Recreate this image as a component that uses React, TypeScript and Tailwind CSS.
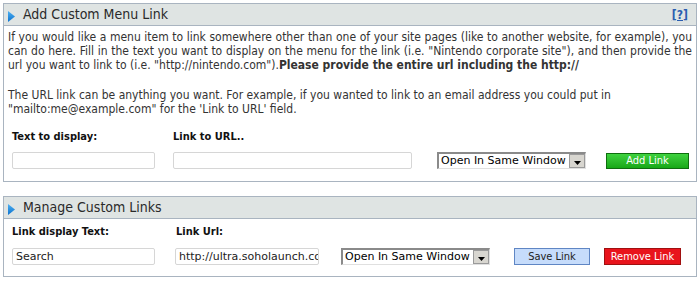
import React from "react";

const BODY = { fontFamily: '"DejaVu Sans Condensed", "Liberation Sans", sans-serif' };
const WIDE = { fontFamily: '"DejaVu Sans", Verdana, sans-serif' };

function Header({ title, help }: { title: string; help?: boolean }) {
  return (
    <div className="flex items-center h-[22px] bg-[#dfe4e3] border-b border-[#a9b4c0] pl-[4px] pr-[8px]">
      <svg width="8" height="11" viewBox="0 0 8 11" className="mt-[3px] mr-[7px]">
        <defs>
          <linearGradient id="tri" x1="0" y1="0" x2="0" y2="1">
            <stop offset="0" stopColor="#4fb0f0" />
            <stop offset="1" stopColor="#0a72d0" />
          </linearGradient>
        </defs>
        <polygon points="0,0 7,5.5 0,11" fill="url(#tri)" />
      </svg>
      <span className="text-[14px] text-[#2a2a2a] flex-1" style={BODY}>
        {title}
      </span>
      {help && (
        <a className="text-[12px] font-bold text-[#2a5db0] underline" style={BODY}>
          [?]
        </a>
      )}
    </div>
  );
}

function Input({ w, value }: { w: string; value?: string }) {
  return (
    <div
      className={`${w} h-[17px] border border-[#d6d6d6] rounded-[2px] bg-white overflow-hidden whitespace-nowrap text-[11px] leading-[15px] px-[3px] text-[#222]`}
      style={WIDE}
    >
      {value}
    </div>
  );
}

function Select() {
  return (
    <div className="w-[149px] h-[17px] flex items-stretch bg-white border-t-2 border-l-2 border-t-[#8a8a8a] border-l-[#8a8a8a] border-b border-r border-b-[#e0e0e0] border-r-[#e0e0e0]">
      <span className="flex-1 text-[11px] leading-[14px] pl-[2px] text-black whitespace-nowrap overflow-hidden" style={WIDE}>
        Open In Same Window
      </span>
      <span className="w-[16px] bg-[#d8d6d0] border border-[#9a9a9a] flex items-center justify-center">
        <svg width="7" height="4" viewBox="0 0 7 4" className="mt-[3px]">
          <polygon points="0,0 7,0 3.5,4" fill="#000" />
        </svg>
      </span>
    </div>
  );
}

export default function App() {
  return (
    <div className="w-[700px] h-[281px] bg-white pt-[3px] px-[3px]" style={BODY}>
      <div className="border border-[#a9b4c0]">
        <Header title="Add Custom Menu Link" help />
        <div className="px-[4px] pt-[4px] pb-[12px] text-[11px] leading-[14px] text-[#333]">
          <div className="text-[12px] leading-[14px]">
            <p className="text-justify">
              If you would like a menu item to link somewhere other than one of your site pages (like to another website, for
              example), you can do here. Fill in the text you want to display on the menu for the link (i.e. "Nintendo corporate
              site"), and then provide the url you want to link to (i.e. "http://nintendo.com").
              <span className="font-bold">Please provide the entire url including the http://</span>
            </p>
            <p className="mt-[16px]">
              The URL link can be anything you want. For example, if you wanted to link to an email address you could put in
              "mailto:me@example.com" for the 'Link to URL' field.
            </p>
          </div>
          <div className="flex mt-[14px] pl-[4px] font-bold text-[#111]">
            <span className="w-[161px]">Text to display:</span>
            <span>Link to URL..</span>
          </div>
          <div className="flex items-center mt-[8px] pl-[4px]">
            <Input w="w-[143px]" />
            <div className="ml-[18px]">
              <Input w="w-[239px]" />
            </div>
            <div className="ml-[25px]">
              <Select />
            </div>
            <button className="ml-[20px] w-[83px] h-[16px] bg-gradient-to-b from-[#3ed23e] to-[#16a816] border border-[#0e6e0e] text-white text-[11px] leading-[14px]">
              Add Link
            </button>
          </div>
        </div>
      </div>

      <div className="border border-[#a9b4c0] mt-[14px]">
        <Header title="Manage Custom Links" />
        <div className="px-[8px] pt-[6px] pb-[11px] text-[11px] leading-[14px]">
          <div className="flex font-bold text-[#111]">
            <span className="w-[164px]">Link display Text:</span>
            <span>Link Url:</span>
          </div>
          <div className="flex items-center mt-[9px]">
            <Input w="w-[143px]" value="Search" />
            <div className="ml-[20px]">
              <Input w="w-[144px]" value="http://ultra.soholaunch.com" />
            </div>
            <div className="ml-[22px]">
              <Select />
            </div>
            <button className="ml-[24px] w-[76px] h-[17px] bg-[#c6dcfb] border border-[#5f86c4] text-[#222] text-[11px] leading-[15px]">
              Save Link
            </button>
            <button className="ml-[14px] w-[77px] h-[17px] bg-[#e8141c] border border-[#a01010] text-white text-[11px] leading-[15px]">
              Remove Link
            </button>
          </div>
        </div>
      </div>
    </div>
  );
}
